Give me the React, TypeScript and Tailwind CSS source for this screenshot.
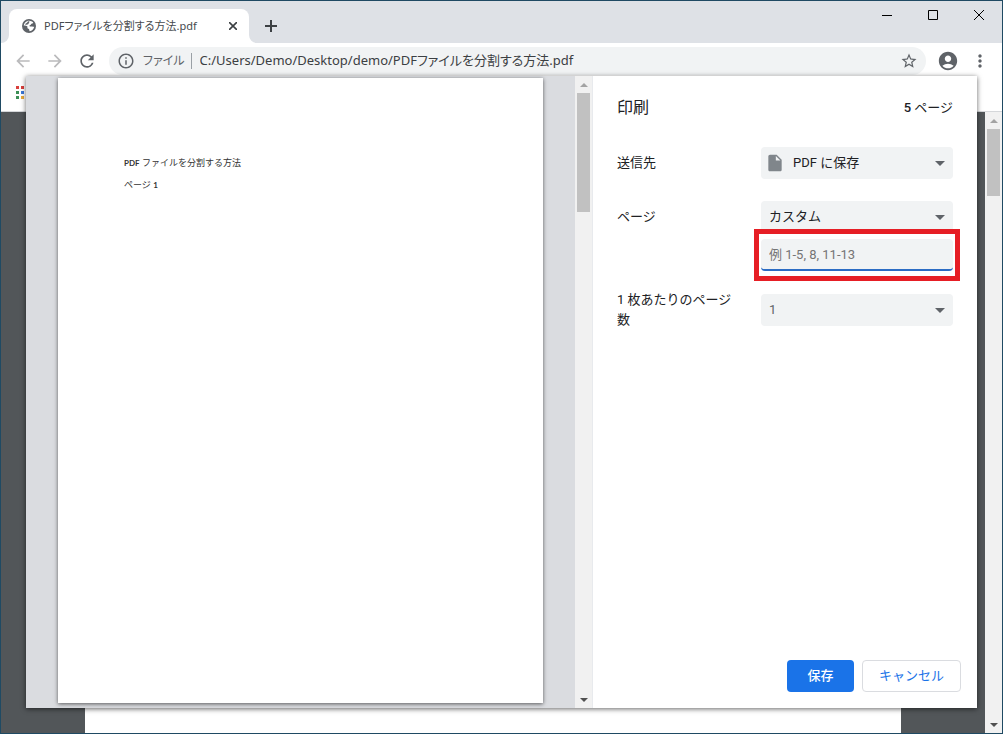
import { useState } from "react";
import type { ReactNode } from "react";
import {
  MdAccountCircle,
  MdArrowBack,
  MdArrowForward,
  MdInfoOutline,
  MdInsertDriveFile,
  MdMoreVert,
  MdRefresh,
  MdStarBorder,
} from "react-icons/md";

const Globe = () => (
  <svg viewBox="0 0 28 28" className="size-3.5 shrink-0">
    <circle cx="14" cy="14" r="14" fill="#5f6368" />
    <path
      fill="#fff"
      d="M12 3.5c4-.8 8 .6 10.500 3.700-.6 2-2 2-3.500 2.300-1.200.3-.8 2-2.200 2.500-1.600.5-2.400 1.200-1.600 2.500.8 1 3 .4 4.800.3 2.200-.1 3.200 1 4.500.6-.8 4.600-4.500 8.300-9.200 9-.9-1-.4-2.500-.9-3.500-.7-1.300-2.600-1-3.400-2.300-.8-1.400.5-2.600-.6-3.900C9.200 13.300 6 13 3.500 13.100 3.900 9 7.500 4.500 12 3.500z"
    />
    <path fill="#5f6368" d="M6 11c2-3 5-3.500 6-6.500l3 .5c0 2-2 3-2 5-2 1.500-4 2-7 1z" />
  </svg>
);

const Caret = () => (
  <svg
    viewBox="0 0 10 5"
    className="pointer-events-none absolute right-2 top-3.5 h-[5px] w-2.5 fill-[#5f6368]"
  >
    <path d="M0 0h10L5 5z" />
  </svg>
);

// スクロールバー
const Scrollbar = ({ children }: { children: ReactNode }) => (
  <div className="flex w-[17px] shrink-0 flex-col items-center bg-[#f1f1f1]">
    <div className="flex h-[17px] shrink-0 items-center">
      <svg viewBox="0 0 8 4" className="h-1 w-2 fill-[#a3a3a3]">
        <path d="M0 4h8L4 0z" />
      </svg>
    </div>
    {children}
    <div className="mt-auto flex h-[17px] shrink-0 items-center">
      <svg viewBox="0 0 8 4" className="h-1 w-2 fill-[#505050]">
        <path d="M0 0h8L4 4z" />
      </svg>
    </div>
  </div>
);

const selectClass =
  "block h-8 w-full appearance-none rounded bg-[#f1f3f4] pr-6 text-[13px] outline-none";

const TabStrip = () => (
  <header className="flex h-[42px] shrink-0 items-end bg-[#dee1e6] pl-2">
    <div className="relative flex h-[34px] w-60 items-center rounded-t-lg bg-white pl-[13px] pr-2 text-[#45494d]">
      <svg viewBox="0 0 8 8" className="absolute -left-2 bottom-0 size-2 fill-white">
        <path d="M8 0v8H0a8 8 0 0 0 8-8z" />
      </svg>
      <svg viewBox="0 0 8 8" className="absolute -right-2 bottom-0 size-2 fill-white">
        <path d="M0 0v8h8a8 8 0 0 1-8-8z" />
      </svg>
      <Globe />
      <span className="ml-2 flex-1 truncate text-[11px] [font-feature-settings:'palt']">
        PDFファイルを分割する方法.pdf
      </span>
      <button aria-label="タブを閉じる" className="flex size-4 items-center justify-center">
        <svg viewBox="0 0 8 8" className="size-2 stroke-[#3c4043] stroke-[1.6]">
          <path d="M0 0l8 8M8 0L0 8" />
        </svg>
      </button>
    </div>
    <button aria-label="新しいタブ" className="flex h-[34px] w-11 items-center justify-center">
      <svg viewBox="0 0 12 12" className="size-3 stroke-[#3c4043] stroke-2">
        <path d="M6 0v12M0 6h12" />
      </svg>
    </button>

    <div className="ml-auto flex self-start">
      <button aria-label="最小化" className="flex h-7 w-[46px] items-center justify-center">
        <svg viewBox="0 0 10 10" className="size-2.5 fill-none stroke-black">
          <path d="M0 5.5h10" />
        </svg>
      </button>
      <button aria-label="最大化" className="flex h-7 w-[46px] items-center justify-center">
        <svg viewBox="0 0 10 10" className="size-2.5 fill-none stroke-black">
          <path d="M.5.5h9v9h-9z" />
        </svg>
      </button>
      <button aria-label="閉じる" className="flex h-7 w-[46px] items-center justify-center">
        <svg viewBox="0 0 10 10" className="size-2.5 fill-none stroke-black">
          <path d="M0 0l10 10M10 0L0 10" />
        </svg>
      </button>
    </div>
  </header>
);

const Toolbar = () => (
  <div className="flex h-9 shrink-0 items-center bg-white pl-3 text-[#5f6368]">
    <div className="flex gap-3">
      <button aria-label="戻る" className="text-[#bababc]">
        <MdArrowBack className="size-5" />
      </button>
      <button aria-label="進む" className="text-[#bababc]">
        <MdArrowForward className="size-5" />
      </button>
      <button aria-label="再読み込み">
        <MdRefresh className="size-5" />
      </button>
    </div>
    <div className="ml-3 flex h-7 flex-1 items-center rounded-full bg-[#f1f3f4] px-2 text-[13px]">
      <MdInfoOutline className="size-[18px] shrink-0" />
      <span className="ml-2 text-[12px] [font-feature-settings:'palt']">ファイル</span>
      <span className="ml-1.5 mr-2 h-4 w-px bg-[#9aa0a6]" />
      <input
        aria-label="アドレス"
        className="min-w-0 flex-1 text-[#3c4043] outline-none [font-feature-settings:'palt']"
        defaultValue="C:/Users/Demo/Desktop/demo/PDFファイルを分割する方法.pdf"
      />
      <button aria-label="ブックマーク">
        <MdStarBorder className="size-[18px]" />
      </button>
    </div>
    <button aria-label="プロフィール" className="ml-[11px]">
      <MdAccountCircle className="size-[22px]" />
    </button>
    <button aria-label="メニュー" className="ml-[11px] mr-3">
      <MdMoreVert className="size-5" />
    </button>
  </div>
);

const appDots = [
  "bg-[#d93f3c]",
  "bg-[#d93f3c]",
  "bg-[#d93f3c]",
  "bg-[#3c8f56]",
  "bg-[#3a78d8]",
  "bg-[#e8a93a]",
  "bg-[#3c8f56]",
  "bg-[#e8a93a]",
  "bg-[#e8a93a]",
];

const PrintSettings = () => {
  const [pages, setPages] = useState("");

  return (
    <form className="flex w-[385px] shrink-0 flex-col border-l border-[#e8eaed] bg-white font-[Roboto,'Noto_Sans_CJK_JP',sans-serif] text-[13px] leading-5 text-[#202124]">
      <div className="flex items-center justify-between px-6 pb-[27px] pt-5">
        <h1 className="text-[16px] leading-6">印刷</h1>
        <span>
          <span className="font-medium">5</span> ページ
        </span>
      </div>

      {/* 送信先 */}
      <div className="flex items-center justify-between px-6">
        <label htmlFor="dest">送信先</label>
        <div className="relative w-48">
          <MdInsertDriveFile className="pointer-events-none absolute left-1 top-1.5 size-5 text-[#80868b]" />
          <select id="dest" className={`${selectClass} pl-8`}>
            <option>PDF に保存</option>
          </select>
          <Caret />
        </div>
      </div>

      {/* ページ範囲 */}
      <div className="mt-[22px] flex justify-between px-6">
        <label htmlFor="range" className="mt-1.5">
          ページ
        </label>
        <div className="w-48">
          <div className="relative">
            <select id="range" className={`${selectClass} pl-2`}>
              <option>カスタム</option>
            </select>
            <Caret />
          </div>
          <div className="relative -mx-[7px] -mt-1 border-[5px] border-[#e61e25] bg-white px-0.5 py-[5px]">
            <input
              aria-label="ページ範囲"
              placeholder="例 1-5, 8, 11-13"
              value={pages}
              onChange={(e) => setPages(e.target.value)}
              className="block h-8 w-full rounded border-b-2 border-[#2b6cc4] bg-[#f1f3f4] px-2 outline-none placeholder:text-[#757575]"
            />
          </div>
        </div>
      </div>

      {/* 1 枚あたりのページ数 */}
      <div className="mt-[9px] flex items-center justify-between px-6">
        <label htmlFor="per" className="w-[120px]">
          1 枚あたりのページ数
        </label>
        <div className="relative w-48">
          <select id="per" className={`${selectClass} pl-2 text-[#5f6368]`}>
            <option>1</option>
          </select>
          <Caret />
        </div>
      </div>

      <div className="mt-auto flex justify-end gap-2 p-4">
        <button
          type="button"
          className="h-8 min-w-[67px] rounded bg-[#1a73e8] px-4 font-medium text-white"
        >
          保存
        </button>
        <button
          type="button"
          className="h-8 rounded border border-[#dadce0] px-4 text-[#1a73e8]"
        >
          キャンセル
        </button>
      </div>
    </form>
  );
};

export default function App() {
  return (
    <div className="relative flex h-screen flex-col overflow-hidden border border-[#1f4a63] bg-white font-['Noto_Sans','Noto_Sans_CJK_JP',sans-serif]">
      <TabStrip />
      <Toolbar />

      {/* ブックマークバー */}
      <div className="flex h-[33px] shrink-0 items-start border-b border-[#d5d7da] bg-white pl-[15px] pt-[7px]">
        <div className="grid grid-cols-3 gap-0.5">
          {appDots.map((c, i) => (
            <span key={i} className={`size-[3px] ${c}`} />
          ))}
        </div>
      </div>

      <div className="flex flex-1 bg-[#525659]">
        <div className="flex flex-1 px-[84px]">
          <div className="flex-1 bg-white" />
        </div>
        <Scrollbar>
          <div className="h-[67px] w-[13px] bg-[#c1c1c1]" />
        </Scrollbar>
      </div>

      {/* 印刷ダイアログ */}
      <div
        role="dialog"
        aria-label="印刷"
        className="absolute inset-x-[25px] bottom-[25px] top-[75px] flex bg-white shadow-[0_1px_5px_rgba(0,0,0,0.6)]"
      >
        <div className="flex flex-1 bg-[#dadce0] px-8 pb-[5px] pt-0.5">
          <div className="flex-1 bg-white pl-[66px] pt-[78px] font-[Lato,'Noto_Sans_CJK_JP',sans-serif] text-[9px] leading-[14px] text-[#333] shadow-[0_1px_4px_rgba(0,0,0,0.6)]">
            <p>
              <b className="text-[8px]">PDF</b> ファイルを分割する方法
            </p>
            <p className="mt-2">
              ページ <b className="text-[8px]">1</b>
            </p>
          </div>
        </div>
        <Scrollbar>
          <div className="h-[119px] w-[13px] bg-[#c1c1c1]" />
        </Scrollbar>
        <PrintSettings />
      </div>
    </div>
  );
}
